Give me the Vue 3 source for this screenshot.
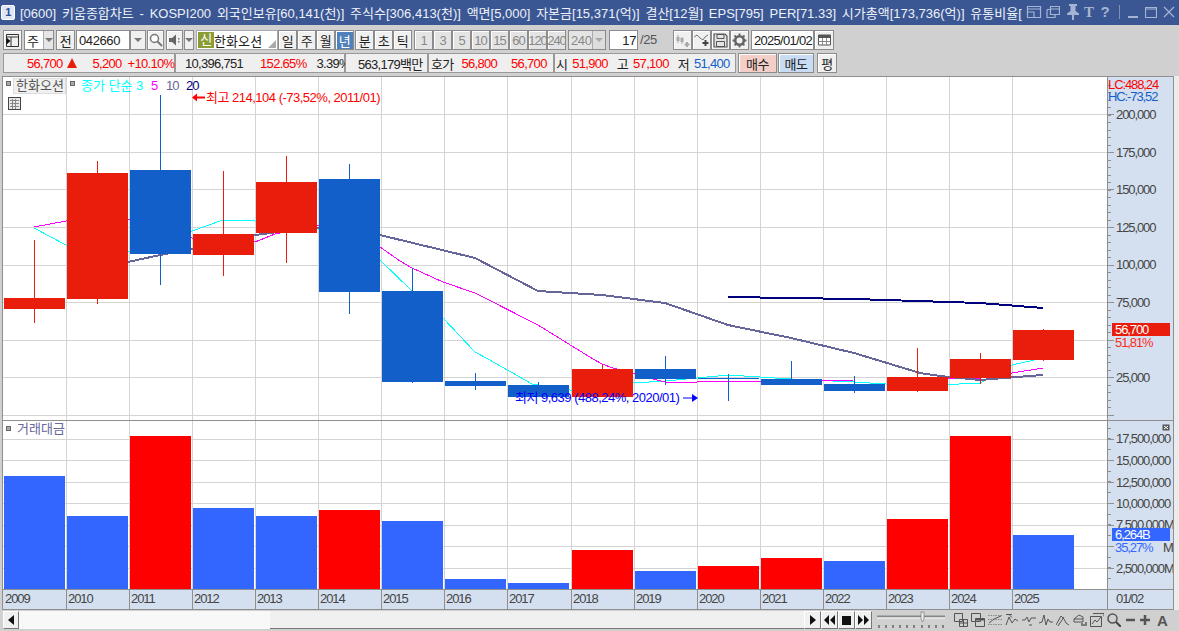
<script setup>
const gridX = [66, 129, 192, 255, 318, 381, 444, 507, 571, 634, 697, 760, 823, 886, 949, 1012]
const priceGrid = [114, 152, 189.5, 227.5, 265, 302.5, 340, 377.5, 415]
const volGrid = [439, 460.5, 482, 503.5, 525, 546.5, 568, 589]

const priceLabels = [
  ['200,000', 114], ['175,000', 152], ['150,000', 189], ['125,000', 227],
  ['100,000', 264], ['75,000', 302], ['25,000', 377],
]
const volLabels = [
  ['17,500,000', 438], ['15,000,000', 460], ['12,500,000', 482], ['10,000,000', 503],
  ['7,500,000M', 524], ['2,500,000M', 568],
]

const priceTicks = []
for (let y = 415; y > 80; y -= 7.5) priceTicks.push(y)
const volTicks = []
for (let y = 578.5; y > 425; y -= 10.75) volTicks.push(y)

// 연봉 데이터: x, 몸통 위/아래, 꼬리 위/아래
const candles = [
  { x: 4, top: 298, bottom: 309, hi: 240, lo: 323, up: true },
  { x: 67, top: 173, bottom: 299, hi: 161, lo: 304, up: true },
  { x: 130, top: 170, bottom: 254, hi: 95, lo: 285, up: false },
  { x: 193, top: 234, bottom: 255, hi: 171, lo: 276, up: true },
  { x: 256, top: 182, bottom: 233, hi: 156, lo: 263, up: true },
  { x: 319, top: 179, bottom: 292, hi: 164, lo: 314, up: false },
  { x: 382, top: 291, bottom: 382, hi: 268, lo: 383, up: false },
  { x: 445, top: 381, bottom: 386, hi: 373, lo: 390, up: false },
  { x: 508, top: 385, bottom: 397, hi: 382, lo: 397, up: false },
  { x: 572, top: 369, bottom: 397, hi: 364, lo: 397, up: true },
  { x: 635, top: 369, bottom: 379, hi: 356, lo: 385, up: false },
  { x: 698, top: 378, bottom: 379, hi: 374, lo: 401, up: false },
  { x: 761, top: 379, bottom: 385, hi: 361, lo: 385, up: false },
  { x: 824, top: 384, bottom: 391, hi: 376, lo: 393, up: false },
  { x: 887, top: 377, bottom: 391, hi: 348, lo: 392, up: true },
  { x: 950, top: 359, bottom: 378, hi: 353, lo: 384, up: true },
  { x: 1013, top: 330, bottom: 360, hi: 329, lo: 361, up: true },
]

const volumes = [
  [4, 476, 0], [67, 516, 0], [130, 436, 1], [193, 508, 0], [256, 516, 0], [319, 510, 1],
  [382, 521, 0], [445, 579, 0], [508, 583, 0], [572, 550, 1], [635, 571, 0], [698, 566, 1],
  [761, 558, 1], [824, 561, 0], [887, 519, 1], [950, 436, 1], [1013, 535, 0],
]

const years = [
  [5, '2009'], [68, '2010'], [131, '2011'], [194, '2012'], [257, '2013'], [320, '2014'],
  [383, '2015'], [446, '2016'], [509, '2017'], [573, '2018'], [636, '2019'], [699, '2020'],
  [762, '2021'], [825, '2022'], [888, '2023'], [951, '2024'], [1014, '2025'],
]

const ma3 = '34,228 66,245 97,262 128,252 160,243 192,231 223,220 255,221 286,224 318,229 349,240 380,260 412,291 443,318 475,352 488,359 532,384 602,395 633,383 665,381 697,378 728,375 791,379 854,382 917,386 980,383 1012,365 1043,358'
const ma5 = '34,227 66,221 97,218 128,219 160,230 192,238 223,241 255,242 275,234 318,225 349,235 380,247 400,261 412,268 443,282 475,293 538,325 593,359 602,364 613,368 653,379 665,382 697,382 728,381 791,381 854,380 917,380 948,379 980,378 1012,373 1043,368'
const ma10 = '128,262 160,255 192,249 223,241 255,235 286,231 318,228 349,230 380,235 475,258 538,291 602,295 665,303 728,325 791,338 854,353 920,373 940,376 980,380 1017,377 1043,375'
const ma20 = '728,297 791,298 854,299 917,301 980,303 1043,308'

const periodBtns = [
  { t: '일' }, { t: '주' }, { t: '월' }, { t: '년', on: true },
]
const unitBtns = ['분', '초', '틱']
const minuteBtns = ['1', '3', '5', '10', '15', '60', '120', '240']
</script>

<template>
  <div class="screen">
    <header class="titlebar">
      <span class="logo">1</span>
      <span class="title-text">[0600] 키움종합차트 - KOSPI200 외국인보유[60,141(천)] 주식수[306,413(천)] 액면[5,000] 자본금[15,371(억)] 결산[12월] EPS[795] PER[71.33] 시가총액[173,736(억)] 유통비율[</span>
      <div class="win-icons">
        <svg width="16" height="14" viewBox="0 0 16 14"><path d="M1.500 1.500h13v11h-13zM1.500 4h13M8 12.500V7H1.500" class="wi" /></svg>
        <svg class="m4" width="14" height="14" viewBox="0 0 14 14"><path d="M4.500 1.500h9v8h-9zM4.500 4h9M1 4.500h3M1 4.500v8h8v-3" class="wi" /></svg>
        <svg class="m6" width="14" height="16" viewBox="0 0 14 16"><path d="M3 0h8v2H9.500v5L13 9.500v1.500H8v5H6v-5H1V9.500L4.500 7V2H3z" fill="#a5b4d2" /></svg>
        <span class="wt serif m4">T</span>
        <span class="wt q">?</span>
        <i class="win-sep"></i>
        <svg class="m7" width="12" height="14" viewBox="0 0 12 14"><path d="M1 12h10" stroke="#a5b4d2" stroke-width="2" /></svg>
        <svg class="m6" width="12" height="14" viewBox="0 0 12 14"><path d="M.5 2.500h11v10H.5zM.5 4h11" class="wi" /></svg>
        <svg class="m6" width="12" height="14" viewBox="0 0 12 14"><path d="M1 2l10 10M11 2L1 12" class="wi" /></svg>
      </div>
    </header>

    <div class="toolbar">
      <div class="row row-one">
        <button class="btn w19 ico">
          <svg width="15" height="15" viewBox="0 0 15 15"><path d="M1.500 1.500h12v12h-12zM1.500 4h12M6 4v9.500" fill="none" stroke="#333" /><path d="M1.500 4.500L5.500 8 1.500 11.500z" fill="#111" /></svg>
        </button>
        <div class="field select ml2 w30">
          <span class="field-txt">주</span><span class="combo-arrow"></span>
        </div>
        <button class="btn w19 ml2">전</button>
        <div class="field ml1 w54"><span class="field-txt">042660</span></div>
        <div class="field w16 center"><span class="combo-arrow bare"></span></div>
        <button class="btn w17 ml1 ico">
          <svg width="14" height="14" viewBox="0 0 14 14"><circle cx="5.500" cy="5.500" r="4" fill="#fff" stroke="#777" stroke-width="1.500" /><path d="M8.500 8.500l4.500 4.500" stroke="#777" stroke-width="2" /></svg>
        </button>
        <button class="btn w17 ml2 ico">
          <svg width="14" height="14" viewBox="0 0 14 14"><path d="M1 5h3l4-3.500v11L4 9H1z" fill="#666" /><path d="M10 5h1.500v1.500H10zM10 8h1.500v1.500H10z" fill="#777" /></svg>
        </button>
        <div class="field w10 ml1 center"><span class="combo-arrow bare"></span></div>
        <div class="name-box">
          <span class="sin">신</span>
          <span class="name">한화오션</span>
          <i class="corner"></i>
        </div>
        <button v-for="b in periodBtns" :key="b.t" class="btn wp" :class="{ on: b.on }">{{ b.t }}</button>
        <button v-for="b in unitBtns" :key="b" class="btn wp" :class="{ first: b === '분' }">{{ b }}</button>
        <div class="minutes">
          <button v-for="m in minuteBtns" :key="m" class="btn off wm">{{ m }}</button>
        </div>
        <div class="field off-combo">
          <span class="field-txt muted">240</span><span class="combo-arrow pale"></span>
        </div>
        <div class="field count"><span>17</span></div>
        <span class="count-max">/25</span>
        <div class="tools">
          <button class="btn wt19 ico">
            <svg width="16" height="14" viewBox="0 0 16 14"><path d="M3 2v8M7 4v7" stroke="#a8a8a8" stroke-width="1" /><path d="M1.500 4h3v4h-3zM5.500 5h3v4h-3z" fill="#a8a8a8" /><path d="M12 9v5M9.500 11.500h5" stroke="#a8a8a8" stroke-width="2" /></svg>
          </button>
          <button class="btn wt19 ico">
            <svg width="16" height="14" viewBox="0 0 16 14"><path d="M0 4l3-2 3 3 3 2 2-3 3-2" fill="none" stroke="#777" /><path d="M11.500 7v6M8.500 10h6" stroke="#444" stroke-width="2" /></svg>
          </button>
          <button class="btn wt19 ico">
            <svg width="15" height="15" viewBox="0 0 15 15"><path d="M1 1h11l2 2v11H1z" fill="#e4e4e4" stroke="#555" stroke-width="1.200" /><path d="M4 1.500h7v4H4zM3.500 8.500h8v5h-8z" fill="none" stroke="#555" /></svg>
          </button>
          <button class="btn wt19 ico">
            <svg width="15" height="15" viewBox="0 0 15 15"><circle cx="7.500" cy="7.500" r="4.300" fill="none" stroke="#666" stroke-width="2.600" /><path d="M7.500.5v14M.5 7.500h14M2.500 2.500l10 10M12.500 2.500l-10 10" stroke="#666" stroke-width="1.800" stroke-dasharray="2.500 9 2.500" /></svg>
          </button>
        </div>
        <div class="field date"><span class="field-txt">2025/01/02</span></div>
        <button class="btn wcal ico">
          <svg width="13" height="12" viewBox="0 0 13 12"><path d="M.5 1h12v10H.5z" fill="#fff" stroke="#555" /><path d="M.5 1h12v3H.5z" fill="#555" /><path d="M4.500 4v7M8.500 4v7M.5 7.500h12" stroke="#888" /></svg>
        </button>
      </div>

      <div class="row row-two">
        <div class="cell c1">
          <span class="r">56,700</span><span class="tri"></span>
          <span class="r v2">5,200</span><span class="r v3">+10.10%</span>
        </div>
        <div class="cell c2">
          <span class="k">10,396,751</span><span class="r v5">152.65%</span><span class="k v6">3.39%</span>
        </div>
        <div class="cell c3"><span class="k">563,179백만</span></div>
        <div class="cell c4">
          <span class="k">호가</span><span class="r v8">56,800</span><span class="r v9">56,700</span>
        </div>
        <div class="cell c5">
          <span class="k">시</span><span class="r v10">51,900</span><span class="k v11">고</span><span class="r v10">57,100</span>
          <span class="k v11">저</span><span class="b v10">51,400</span>
        </div>
        <button class="btn buy">매수</button>
        <button class="btn sell">매도</button>
        <button class="btn eval">평</button>
      </div>
    </div>

    <svg class="chart" width="1179" height="534" viewBox="0 76 1179 534">
      <rect x="2" y="76" width="1171" height="534" fill="#fff" />
      <line v-for="x in gridX" :key="'g' + x" :x1="x + 0.5" :x2="x + 0.5" y1="77" y2="589" class="grid" />
      <line v-for="y in priceGrid" :key="'p' + y" x1="3" x2="1107" :y1="y" :y2="y" class="grid" />
      <line v-for="y in volGrid" :key="'v' + y" x1="3" x2="1107" :y1="y" :y2="y" class="grid" />

      <polyline :points="ma3" class="ma" stroke="#00ffff" stroke-width="1" />
      <polyline :points="ma5" class="ma" stroke="#ff00ff" stroke-width="1" />
      <polyline :points="ma10" class="ma" stroke="#66669a" stroke-width="2" />
      <polyline :points="ma20" class="ma" stroke="#00007f" stroke-width="2" />

      <g v-for="c in candles" :key="c.x">
        <rect :x="c.x + 30" :y="c.hi" width="1" :height="c.lo - c.hi" :fill="c.up ? '#e91d0b' : '#125fc9'" />
        <rect :x="c.x" :y="c.top" width="61" :height="c.bottom - c.top" :fill="c.up ? '#e91d0b' : '#125fc9'" />
      </g>

      <rect v-for="v in volumes" :key="'b' + v[0]" :x="v[0]" :y="v[1]" width="61" :height="590 - v[1]" :fill="v[2] ? '#ff0000' : '#3366ff'" />

      <!-- 범례 -->
      <rect x="6.500" y="81.500" width="4" height="4" fill="#aaa" stroke="#666" />
      <rect x="13.500" y="78.500" width="52" height="15" fill="#f0f0f0" stroke="#ddd" />
      <text x="16" y="90" class="tk" fill="#555">한화오션</text>
      <rect x="70.500" y="81.500" width="4" height="4" fill="#aaa" stroke="#666" />
      <text x="81" y="90" class="tk" fill="#00ffff">종가 단순 3</text>
      <text x="151" y="90" class="t" fill="#ff00ff">5</text>
      <text x="166" y="90" class="t" fill="#66669a">10</text>
      <text x="186" y="90" class="t" fill="#00007f">20</text>

      <path d="M192 97.500l5-4v3h8v2h-8v3z" fill="#ff0000" />
      <text x="206" y="102" class="t2" fill="#ff0000">최고 214,104 (-73,52%, 2011/01)</text>
      <rect x="8.500" y="97.500" width="12" height="12" fill="#e8e8e8" stroke="#444" />
      <path d="M10 100.500h9M10 103.500h9M10 106.500h9M12.500 99v10M15.500 99v10" stroke="#888" />

      <text x="515" y="402" class="t2" fill="#0000ff">최저 9,639 (488,24%, 2020/01)</text>
      <path d="M683 397.500h9v-3.500l6 4-6 4v-3.500h-9z" fill="#0000ff" />

      <!-- 오른쪽 축 -->
      <rect x="1107" y="77" width="66" height="512" fill="#d4e0ef" />
      <rect x="1107" y="589" width="66" height="20" fill="#d4e0ef" />
      <rect x="3" y="590" width="1104" height="19" fill="#d4e0ef" />
      <line x1="1107.500" x2="1107.500" y1="77" y2="609" class="frame" />
      <line v-for="y in priceTicks" :key="'pt' + y" x1="1107" x2="1111" :y1="y" :y2="y" class="frame" />
      <line v-for="y in priceGrid" :key="'pm' + y" x1="1107" x2="1114" :y1="y" :y2="y" class="frame" />
      <line v-for="y in volTicks" :key="'vt' + y" x1="1107" x2="1111" :y1="y" :y2="y" class="frame" />
      <line v-for="y in volGrid" :key="'vm' + y" x1="1107" x2="1114" :y1="y" :y2="y" class="frame" />
      <text v-for="l in priceLabels" :key="l[0]" x="1116" :y="l[1] + 5" class="t" fill="#444">{{ l[0] }}</text>
      <text v-for="l in volLabels" :key="l[0]" x="1116" :y="l[1] + 5" class="t" fill="#444">{{ l[0] }}</text>
      <text x="1163" y="552" class="t" fill="#444">M</text>

      <text x="1108" y="89" class="t" fill="#ff0000">LC:488,24</text>
      <text x="1108" y="101" class="t" fill="#125fc9">HC:-73,52</text>

      <rect x="1112" y="323" width="58" height="13" fill="#e91d0b" />
      <text x="1115" y="334" class="t" fill="#fff">56,700</text>
      <text x="1115" y="347" class="t" fill="#ff2a1a">51,81%</text>

      <rect x="1112" y="528" width="58" height="13" fill="#3366ff" />
      <text x="1115" y="539" class="t" fill="#fff">6,264B</text>
      <text x="1115" y="552" class="t" fill="#3366ff">35,27%</text>

      <rect x="1162.500" y="424.500" width="7" height="6" fill="#555" />
      <path d="M1164 426l4 3M1168 426l-4 3" stroke="#fff" />

      <!-- 거래대금 -->
      <line x1="3" x2="1173" y1="420.500" y2="420.500" class="frame" stroke-width="1.500" />
      <rect x="6.500" y="426.500" width="4" height="4" fill="#aaa" stroke="#666" />
      <text x="17" y="433" class="tk" fill="#66669a">거래대금</text>

      <!-- 날짜축 -->
      <line x1="3" x2="1173" y1="589.500" y2="589.500" class="frame" />
      <line x1="3" x2="1173" y1="609.500" y2="609.500" class="frame" />
      <line v-for="x in gridX" :key="'a' + x" :x1="x + 0.5" :x2="x + 0.5" y1="590" y2="609" class="frame" />
      <g v-for="y in years" :key="y[1]">
        <text :x="y[0]" y="603" class="t" fill="#444">{{ y[1] }}</text>
      </g>
      <text x="1116" y="603" class="t" fill="#444">01/02</text>

      <line x1="2.500" x2="2.500" y1="76" y2="610" class="frame" stroke-width="1.500" />
      <line x1="2" x2="1173" y1="76.500" y2="76.500" class="frame" />
      <line x1="1173" x2="1173" y1="76" y2="610" class="frame" stroke-width="2" />
      <rect x="1174" y="76" width="5" height="534" fill="#ececec" />
    </svg>

    <footer class="scrollbar">
      <button class="sb-btn left"><svg width="6" height="10" viewBox="0 0 6 10"><path d="M6 0v10L0 5z" fill="#111" /></svg></button>
      <div class="track"></div>
      <div class="thumb"></div>
      <button class="sb-btn nav"><svg width="7" height="10" viewBox="0 0 7 10"><path d="M1 0v10l6-5z" fill="#111" /></svg></button>
      <button class="sb-btn nav"><svg width="11" height="10" viewBox="0 0 11 10"><path d="M5 0v10L0 5zM11 0v10L6 5z" fill="#111" /></svg></button>
      <button class="sb-btn nav"><svg width="9" height="9" viewBox="0 0 9 9"><rect width="9" height="9" fill="#111" /></svg></button>
      <button class="sb-btn nav"><svg width="11" height="10" viewBox="0 0 11 10"><path d="M0 0v10l5-5zM6 0v10l5-5z" fill="#111" /></svg></button>
      <div class="slider">
        <svg width="70" height="18" viewBox="0 0 70 18">
          <path d="M1 5.500h68" stroke="#888" stroke-width="2" /><path d="M1 7h68" stroke="#fff" />
          <path d="M45 1h3v7l-1.500 3L45 8z" fill="#eee" stroke="#777" stroke-width=".7" />
          <path d="M3 14v3M10 14v3M17 14v3M24 14v3M31 14v3M38 14v3M46 14v3M53 14v3M60 14v3M67 14v3" stroke="#333" />
        </svg>
      </div>
      <div class="mini-icons">
        <svg width="14" height="14" viewBox="0 0 14 14"><path d="M.5.500h8v8h-8zM5.500 6.500h8v7h-8zM9.500 6.500v7M5.500 10h8" class="mi" /></svg>
        <svg width="14" height="14" viewBox="0 0 14 14"><path d="M.5.500h9v8h-9zM4.500 5.500h9v8h-9z" class="mi" /><path d="M4.500 5.500h9v2h-9z" fill="#555" /></svg>
        <svg width="14" height="14" viewBox="0 0 14 14"><path d="M0 2.500h14M0 6.500h14M0 11.500h14" stroke="#888" stroke-dasharray="1.500 1" /><path d="M1 10l5-4 7-3" class="mi" /></svg>
        <svg width="14" height="14" viewBox="0 0 14 14"><path d="M1 1.500h6M4 1.500l3 3M1 12l3-8 3 6 3-4 3 2" class="mi" /></svg>
        <svg width="14" height="14" viewBox="0 0 14 14"><path d="M0 7h3l2-3 2 5 2-4h5M7 12h3" class="mi" /></svg>
        <svg width="14" height="14" viewBox="0 0 14 14"><path d="M0 10l3-1 2-7 2 10 2-6 2 3h3" class="mi" /></svg>
        <svg width="14" height="14" viewBox="0 0 14 14"><path d="M0 12l5-9 3 3 2 4 3 2M2 13l6-9" class="mi" /></svg>
        <svg width="14" height="14" viewBox="0 0 14 14"><path d="M1 6l5-4 4 2v5H1zM1 6h9" class="mi" /><path d="M9 13v-3M11 13v-2M13 13V9" stroke="#444" stroke-width="1.200" /></svg>
        <svg width="14" height="14" viewBox="0 0 14 14"><path d="M.5 3.500h11v10H.5zM3 .5h11v3" class="mi" /><path d="M2 11l3-4 2 2 4-5" class="mi" /></svg>
        <svg width="14" height="14" viewBox="0 0 14 14"><circle cx="5.500" cy="5.500" r="4.500" class="mi" stroke-width="1.500" /><path d="M9 9l5 5" stroke="#444" stroke-width="2" /></svg>
        <svg width="12" height="14" viewBox="0 0 12 14"><path d="M2 7h9" stroke="#555" stroke-width="2.500" /></svg>
        <svg width="12" height="14" viewBox="0 0 12 14"><path d="M1 7h10M6 2v10" stroke="#555" stroke-width="2.500" /></svg>
        <span class="mini-a">A</span>
      </div>
    </footer>
  </div>
</template>

<style>
html, body {
  margin: 0;
  background: #d0d0d0;
}
</style>

<style scoped>
.screen {
  width: 1179px;
  height: 631px;
  overflow: hidden;
  background: #d0d0d0;
  font-family: "Liberation Sans", "Noto Sans CJK KR", sans-serif;
  font-size: 13px;
  letter-spacing: -0.4px;
  color: #222;
}

/* 타이틀바 */
.titlebar {
  height: 25px;
  background: #3a5794;
  display: flex;
  align-items: center;
  position: relative;
}
.logo {
  width: 12px;
  height: 13px;
  margin: 0 5px 0 1px;
  background: #dfe7f5;
  border: 1px solid #fff;
  border-radius: 2px;
  color: #2b4f94;
  font-weight: bold;
  font-size: 11px;
  line-height: 13px;
  text-align: center;
}
.title-text {
  color: #eef1f8;
  white-space: nowrap;
  width: 1002px;
  overflow: hidden;
  letter-spacing: 0;
  word-spacing: 2.2px;
}
.win-icons {
  position: absolute;
  left: 1026px;
  top: 4px;
  display: flex;
  align-items: center;
}
.m4 { margin-left: 4px; }
.m6 { margin-left: 6px; }
.m7 { margin-left: 7px; }
.wi {
  fill: none;
  stroke: #a5b4d2;
  stroke-width: 1.200;
}
.wt {
  color: #a5b4d2;
  font-weight: bold;
  font-size: 15px;
  line-height: 16px;
}
.serif {
  font-family: "Liberation Serif", serif;
}
.q {
  margin-left: 7px;
}
.win-sep {
  width: 1px;
  height: 14px;
  margin-left: 10px;
  background: #7e90b8;
}

/* 툴바 */
.toolbar {
  height: 51px;
  padding: 5px 0 0 3px;
  box-sizing: border-box;
}
.row {
  display: flex;
  height: 20px;
  align-items: stretch;
}
.row-two {
  margin-top: 3px;
}
.btn {
  box-sizing: border-box;
  padding: 0;
  margin: 0;
  border: 1px solid #8c8c8c;
  background: #f0f0f0;
  font: inherit;
  letter-spacing: -0.4px;
  color: #222;
  box-shadow: inset 1px 1px 0 #fff;
  display: flex;
  align-items: center;
  justify-content: center;
  overflow: hidden;
}
.w19 { width: 19px; }
.w17 { width: 17px; }
.w30 { width: 30px; }
.w54 { width: 54px; }
.w16 { width: 16px; }
.w10 { width: 10px; }
.ml1 { margin-left: 1px; }
.ml2 { margin-left: 2px; }
.wp { width: 19px; }
.wm {
  width: 19px;
  letter-spacing: -1.1px;
}
.wt19 { width: 19px; }
.wcal { width: 20px; }
.first { margin-left: 1px; }
.on {
  background: #4f81bd;
  color: #fff;
}
.off {
  color: #888;
  background: #e4e4e4;
}
.field {
  box-sizing: border-box;
  background: #fff;
  border: 1px solid #8c8c8c;
  display: flex;
  align-items: center;
}
.field-txt {
  padding-left: 2px;
}
.center {
  justify-content: center;
  background: #f0f0f0;
}
.select {
  justify-content: space-between;
}
.select .field-txt {
  width: 16px;
}
.combo-arrow {
  flex: 1;
  align-self: stretch;
  position: relative;
  background: #e6e6e6;
  border-left: 1px solid #aaa;
}
.combo-arrow::after {
  content: "";
  position: absolute;
  left: 50%;
  top: 7px;
  margin-left: -4px;
  border: 4px solid transparent;
  border-top: 4px solid #777;
  border-bottom: 0;
}
.combo-arrow.bare {
  flex: none;
  width: 8px;
  height: 100%;
  background: transparent;
  border-left: 0;
}
.combo-arrow.pale {
  background: #ddd;
}
.combo-arrow.pale::after {
  border-top-color: #aaa;
}
.muted {
  color: #888;
}
.name-box {
  box-sizing: border-box;
  width: 82px;
  margin-left: 2px;
  background: #fff;
  border: 1px solid #aaa;
  display: flex;
  align-items: center;
  position: relative;
}
.sin {
  width: 16px;
  height: 16px;
  margin-left: 1px;
  background: #8c9c34;
  color: #fff;
  text-align: center;
  line-height: 16px;
}
.name {
  margin-left: 0;
  letter-spacing: 0.1px;
}
.corner {
  position: absolute;
  right: 1px;
  bottom: 1px;
  border: 4px solid transparent;
  border-right-color: #aaa;
  border-bottom-color: #aaa;
}
.minutes {
  display: flex;
  margin-left: 2px;
}
.off-combo {
  width: 38px;
  margin-left: 2px;
  background: #e4e4e4;
}
.count {
  width: 29px;
  margin-left: 3px;
  justify-content: flex-end;
  padding-right: 1px;
}
.count-max {
  width: 35px;
  padding-left: 2px;
  box-sizing: content-box;
  margin-right: -2px;
  color: #555;
  line-height: 20px;
}
.tools {
  display: flex;
}
.ico svg {
  display: block;
}
.date {
  width: 63px;
  margin-left: 2px;
  letter-spacing: -0.7px;
}

.cell {
  box-sizing: border-box;
  height: 20px;
  background: #efefef;
  border: 1px solid #999;
  display: flex;
  align-items: center;
  white-space: nowrap;
  letter-spacing: -0.7px;
}
.c1 { width: 172px; padding-left: 23px; }
.c2 { width: 170px; padding-left: 9px; }
.c3 { width: 83px; padding-left: 12px; }
.c4 { width: 126px; padding-left: 2px; }
.c5 { width: 182px; padding-left: 1px; }
.r { color: #ff0000; }
.b { color: #125fc9; }
.k { color: #222; }
.tri {
  margin-left: 4px;
  border: 5px solid transparent;
  border-bottom: 10px solid #e91d0b;
  border-top: 0;
}
.v2 { margin-left: 16px; }
.v3 { margin-left: 6px; }
.v5 { margin-left: 17px; }
.v6 { margin-left: 10px; }
.v8 { margin-left: 8px; }
.v9 { margin-left: 14px; }
.v10 { margin-left: 5px; }
.v11 { margin-left: 9px; }
.buy {
  width: 39px;
  margin-left: 2px;
  background: #f4cfc8;
}
.sell {
  width: 36px;
  margin-left: 1px;
  background: #c8ddf3;
}
.eval {
  width: 20px;
  margin-left: 3px;
}

/* 차트 */
.chart {
  display: block;
}
.grid {
  stroke: #d4d4d4;
  stroke-width: 1;
  shape-rendering: crispEdges;
}
.frame {
  stroke: #8f8f8f;
  stroke-width: 1;
  shape-rendering: crispEdges;
}
.ma {
  fill: none;
  shape-rendering: crispEdges;
}
.t {
  font-size: 13px;
  letter-spacing: -1.1px;
}
.t2 {
  font-size: 13px;
  letter-spacing: -0.5px;
}
.tk {
  font-size: 13px;
  letter-spacing: 0;
}

/* 하단 스크롤바 */
.scrollbar {
  height: 18px;
  margin-top: 1px;
  padding-left: 3px;
  display: flex;
  align-items: stretch;
}
.sb-btn {
  box-sizing: border-box;
  width: 16px;
  padding: 0;
  margin: 0;
  border: 1px solid #777;
  border-top-color: #fff;
  border-left-color: #fff;
  background: #f0f0f0;
  display: flex;
  align-items: center;
  justify-content: center;
}
.left { width: 16px; }
.nav { width: 17px; }
.track {
  width: 251px;
  background: #f8f8f8;
}
.thumb {
  width: 534px;
  box-sizing: border-box;
  background: #f0f0f0;
  border-bottom: 1px solid #777;
}
.slider {
  margin-left: 4px;
  width: 74px;
  background: #d0d0d0;
}
.slider svg {
  display: block;
}
.mini-icons {
  margin-left: 4px;
  display: flex;
  align-items: center;
  gap: 3px;
}
.mi {
  fill: none;
  stroke: #555;
}
.mini-a {
  margin-left: 3px;
  font-weight: bold;
  color: #555;
  font-size: 15px;
}
</style>
